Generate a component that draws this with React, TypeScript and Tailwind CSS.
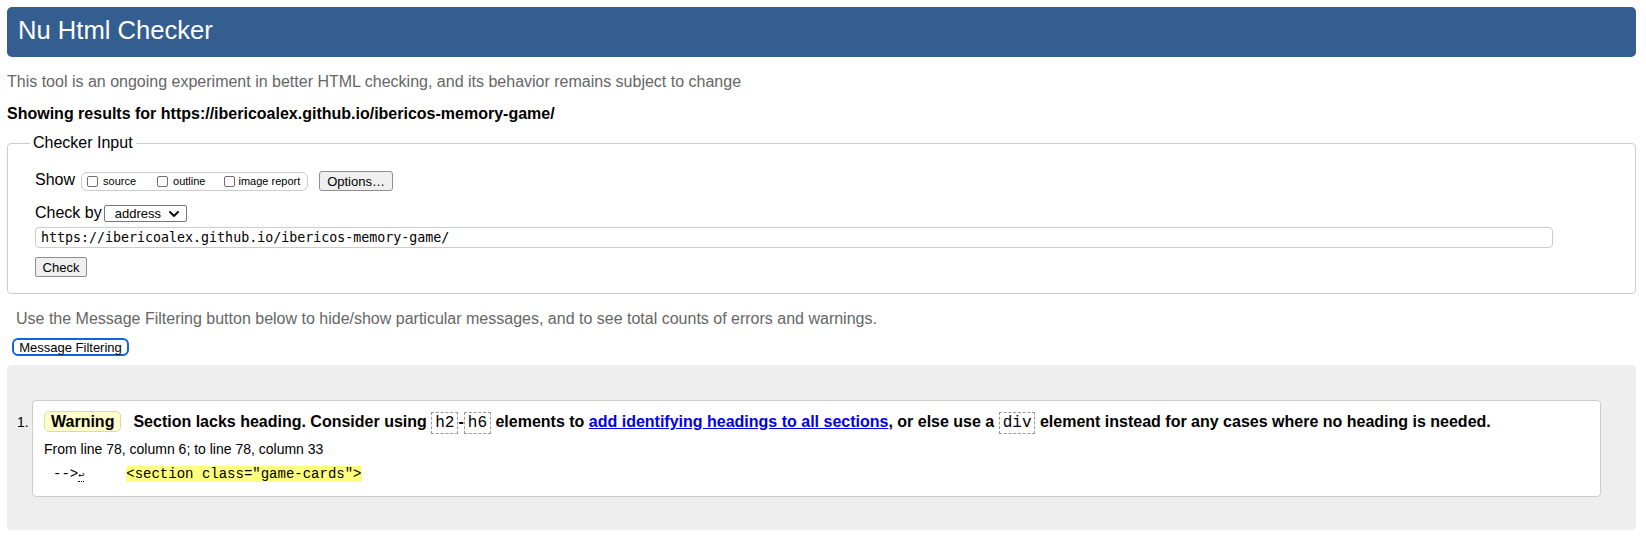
function Box({ className = "" }: { className?: string }) {
  return (
    <span
      className={
        "inline-block h-[11px] w-[11px] shrink-0 rounded-[2px] border border-[#6f6f6f] bg-white " +
        className
      }
    />
  );
}

function Code({ children }: { children: string }) {
  return (
    <span className="inline-block h-[22px] border border-dashed border-[#999] px-[3px] font-['Liberation_Mono',monospace] text-[16px] font-normal leading-[20px]">
      {children}
    </span>
  );
}

export default function App() {
  return (
    <div className="min-h-[539px] bg-white pl-[7px] pr-[10px] pt-[7px] font-['Liberation_Sans',Arial,sans-serif] text-black">
      <header className="h-[50px] rounded-[5px] bg-[#335e8f] pl-[11px] pt-[9px]">
        <h1 className="text-[25.6px] leading-[29px] text-white">Nu Html Checker</h1>
      </header>

      <p className="mt-[16px] text-[16px] leading-[18px] text-[#666]">
        This tool is an ongoing experiment in better HTML checking, and its behavior remains subject to change
      </p>
      <p className="mt-[14px] text-[16px] font-bold leading-[18px]">
        Showing results for https://ibericoalex.github.io/ibericos-memory-game/
      </p>

      <fieldset className="mt-[11px] rounded-[4px] border border-[#ccc] pb-[16px] pl-[27px]">
        <legend className="-ml-[5px] px-[3px] text-[16px] leading-[18px]">Checker Input</legend>

        <div className="mt-[19px] flex items-start">
          <span className="text-[16px] leading-[18px]">Show</span>
          <span className="ml-[6px] mt-[1px] flex h-[19px] w-[227px] items-center rounded-[6px] border border-[#ccc] text-[11px] leading-none">
            <Box className="ml-[5px]" />
            <span className="ml-[5px]">source</span>
            <Box className="ml-[21px]" />
            <span className="ml-[5px]">outline</span>
            <Box className="ml-[19px]" />
            <span className="ml-[3px]">image report</span>
          </span>
          <button className="ml-[11px] h-[20px] w-[74px] rounded-[3px] border border-[#8e8e8e] bg-[#efefef] text-[13px] leading-none">
            Options…
          </button>
        </div>

        <div className="mt-[13px] flex items-start">
          <span className="text-[16px] leading-[18px]">Check by</span>
          <span className="ml-[2px] mt-[1px] flex h-[17px] w-[83px] items-center rounded-[2px] border border-[#767676] bg-white pl-[10px] text-[13px] leading-none">
            <span>address</span>
            <svg className="ml-[7px]" width="12" height="10" viewBox="0 0 12 10">
              <path d="M2 3 L6 7 L10 3" fill="none" stroke="#111" strokeWidth="2" strokeLinecap="round" strokeLinejoin="round" />
            </svg>
          </span>
        </div>

        <div className="mt-[5px] flex h-[21px] w-[1518px] items-center rounded-[4px] border border-[#ccc] pl-[5px] font-['DejaVu_Sans_Mono',monospace] text-[13.3px] leading-none">
          https://ibericoalex.github.io/ibericos-memory-game/
        </div>

        <button className="mt-[9px] block h-[20px] w-[52px] rounded-[2px] border border-[#8e8e8e] bg-[#efefef] text-[13px] leading-none">
          Check
        </button>
      </fieldset>

      <p className="mt-[16px] pl-[9px] text-[16px] leading-[18px] text-[#666]">
        Use the Message Filtering button below to hide/show particular messages, and to see total counts of errors and warnings.
      </p>
      <div className="mt-[10px] flex pl-[5px]">
        <button className="h-[18px] w-[117px] rounded-[6px] border-2 border-[#1463d6] bg-white text-[13px] leading-none">
          Message Filtering
        </button>
      </div>

      <div className="mt-[9px] flex rounded-[4px] bg-[#eee] pb-[33px] pl-[10px] pr-[35px] pt-[35px]">
        <span className="w-[15px] shrink-0 pt-[14px] text-[14px] leading-[16px]">1.</span>
        <div className="flex-1 rounded-[4px] border border-[#ccc] bg-white pb-[12px] pl-[11px] pt-[10px]">
          <div className="flex h-[22px] items-start">
            <span className="flex h-[21px] items-center rounded-[5px] border border-[#dcdca0] bg-[#ffc] px-[6px] text-[16px] font-bold leading-none">
              Warning
            </span>
            <span className="ml-[12px] text-[16px] font-bold leading-[21px]">
              Section lacks heading. Consider using <Code>h2</Code>-<Code>h6</Code> elements to{" "}
              <a href="#" className="text-[#0000ee] underline">
                add identifying headings to all sections
              </a>
              , or else use a <Code>div</Code> element instead for any cases where no heading is needed.
            </span>
          </div>
          <p className="mt-[8px] text-[14px] leading-[16px]">From line 78, column 6; to line 78, column 33</p>
          <p className="mt-[9px] whitespace-pre pl-[9px] font-['Liberation_Mono',monospace] text-[14px] leading-[16px]">
            {"-->"}
            <b className="border-b border-dotted border-black text-[10px] font-normal">↩</b>
            {"     "}
            <span className="bg-[#ffff80]">{'<section class="game-cards">'}</span>
          </p>
        </div>
      </div>
    </div>
  );
}
